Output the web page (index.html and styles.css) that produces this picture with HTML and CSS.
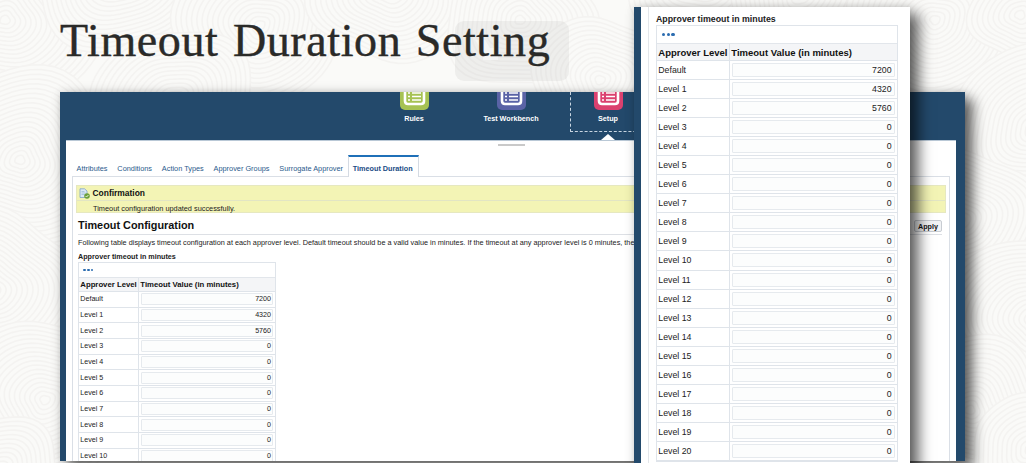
FILE: index.html
```
<!DOCTYPE html>
<html lang="en">

<head>
    <meta charset="utf-8">
    <title>Timeout Duration Setting</title>
    <link rel="stylesheet" href="styles.css">
</head>

<body>
    <svg class="backdrop" width="1026" height="463" aria-hidden="true">
        <g id="swirls" fill="none" stroke="#f4f3f1" stroke-width="1.6"></g>
    </svg>
    <div class="badge">
        <svg width="114" height="60" viewBox="0 0 114 60">
            <path d="M20 19h10l5 8h8v12H28v-8z" fill="#f5f5f4" />
        </svg>
    </div>

    <h1 class="title"><span>Timeout</span> <span>Duration</span> <span>Setting</span></h1>

    <div class="window">
        <div class="nav">
            <div class="nav-item">
                <svg class="nav-icon rules" viewBox="0 0 29 18">
                    <path d="M5 0v9q0 3 3 3h13q3 0 3-3V0" />
                    <path class="lines" d="M8 1h2M8 4.500h2M8 8h2M12 1h9M12 4.500h9M12 8h9" />
                </svg>
                <span>Rules</span>
            </div>
            <div class="nav-item">
                <svg class="nav-icon workbench" viewBox="0 0 29 18">
                    <path d="M5 0v9q0 3 3 3h13q3 0 3-3V0" />
                    <path class="lines" d="M8 1h2M8 4.500h2M8 8h2M12 1h9M12 4.500h9M12 8h9" />
                </svg>
                <span>Test Workbench</span>
            </div>
            <div class="nav-item active">
                <svg class="nav-icon setup" viewBox="0 0 29 18">
                    <path d="M5 0v9q0 3 3 3h13q3 0 3-3V0" />
                    <path class="lines" d="M8 1h2M8 4.500h2M8 8h2M12 1h9M12 4.500h9M12 8h9" />
                </svg>
                <span>Setup</span>
            </div>
        </div>

        <div class="page">
            <div class="grip"></div>
            <div class="tabs">
                <a class="tab">Attributes</a>
                <a class="tab">Conditions</a>
                <a class="tab">Action Types</a>
                <a class="tab">Approver Groups</a>
                <a class="tab">Surrogate Approver</a>
                <a class="tab selected">Timeout Duration</a>
            </div>
            <div class="panel">
                <div class="message">
                    <div class="message-head">
                        <svg width="11" height="11" viewBox="0 0 11 11">
                            <path d="M1 .8h4.500L8 3v6.500H1z" fill="#dbe9f6" stroke="#7fa3c8" stroke-width=".8" />
                            <path d="M2.500 3.500h3M2.500 5h4M2.500 6.500h3" stroke="#8db0d2" stroke-width=".6" />
                            <circle cx="8" cy="8" r="2.800" fill="#6da03a" />
                            <path d="M6.600 8l1 1 1.800-2" fill="none" stroke="#fff" stroke-width=".8" />
                        </svg>
                        <span>Confirmation</span>
                    </div>
                    <div class="message-text">Timeout configuration updated successfully.</div>
                </div>
                <div class="heading">
                    <h2>Timeout Configuration</h2>
                    <button class="apply">Apply</button>
                </div>
                <p class="note">Following table displays timeout configuration at each approver level. Default timeout should be a valid value in minutes. If the timeout at any approver level is 0 minutes, then</p>
                <div class="levels" data-last="10">
                    <h3>Approver timeout in minutes</h3>
                </div>
            </div>
        </div>
    </div>

    <div class="zoomed">
        <div class="zoomed-page">
            <div class="levels large" data-last="20">
                <h3>Approver timeout in minutes</h3>
            </div>
        </div>
    </div>

    <script>
        const timeouts = [7200, 4320, 5760];

        function addCell(grid, className, text) {
            const cell = document.createElement("div");
            cell.className = className;
            cell.textContent = text;
            grid.appendChild(cell);
            return cell;
        }

        //fill both copies of the level table
        document.querySelectorAll(".levels").forEach((levels) => {
            const grid = document.createElement("div");
            grid.className = "grid";
            const dots = addCell(grid, "dots", "");
            for (let i = 0; i < 3; i++) {
                dots.appendChild(document.createElement("i"));
            }
            addCell(grid, "cell head", "Approver Level");
            addCell(grid, "cell head last", "Timeout Value (in minutes)");
            for (let i = 0; i <= Number(levels.dataset.last); i++) {
                addCell(grid, "cell", i === 0 ? "Default" : `Level ${i}`);
                const cell = addCell(grid, "cell value", "");
                addCell(cell, "field", timeouts[i] || 0);
            }
            levels.appendChild(grid);
        });

        //background rings, later groups cover earlier ones
        const swirls = document.getElementById("swirls");
        const centers = [
            [5, 20, 95], [120, -30, 90], [260, 25, 85], [390, -10, 80], [520, 20, 75], [600, 80, 70],
            [175, 100, 80], [20, 160, 100], [-10, 290, 90], [45, 400, 90], [0, 470, 60],
            [700, -20, 70], [800, -5, 75], [935, 20, 85], [1020, 15, 50],
            [1035, 130, 90], [960, 220, 80], [1035, 320, 95], [970, 410, 80], [1030, 450, 60]
        ];

        //slightly uneven closed curve, like a hand drawn ring
        function ringPath(x, y, r, wobble) {
            let d = "";
            for (let step = 0; step < 60; step++) {
                const angle = step * Math.PI / 30;
                const radius = r * (1 + 0.07 * Math.sin(angle * 3 + wobble) + 0.03 * Math.cos(angle * 5 + wobble));
                const px = x + radius * Math.cos(angle);
                const py = y + radius * 0.9 * Math.sin(angle);
                d += `${step ? "L" : "M"}${px.toFixed(1)} ${py.toFixed(1)}`;
            }
            return d + "Z";
        }

        centers.forEach(([x, y, size], index) => {
            for (let r = size; r > 2; r -= 5) {
                const ring = document.createElementNS("http://www.w3.org/2000/svg", "path");
                ring.setAttribute("d", ringPath(x, y, r, index * 1.7));
                if (r === size) {
                    ring.setAttribute("fill", "#fafaf8");
                }
                swirls.appendChild(ring);
            }
        });
    </script>
</body>

</html>
```
FILE: styles.css
```
* {
    box-sizing: border-box;
}

body {
    margin: 0;
    width: 1026px;
    height: 463px;
    overflow: hidden;
    position: relative;
    background-color: #fafaf8;
    color: #222;
    font-family: "Liberation Sans", Arial, sans-serif;
}

.backdrop {
    position: absolute;
    top: 0;
    left: 0;
    z-index: -2;
}

.badge {
    position: absolute;
    left: 455px;
    top: 21px;
    width: 114px;
    height: 60px;
    border-radius: 9px;
    background-color: rgba(120, 120, 120, 0.09);
    z-index: -1;
}

.title {
    display: flex;
    gap: 14.5px;
    margin: 0;
    height: 92px;
    padding: 15px 0 0 60px;
    font: 46px/52px "Liberation Serif", serif;
    letter-spacing: 0.6px;
    color: #2a2a28;
    -webkit-text-stroke: 0.4px #2a2a28;
}

.window {
    width: 905px;
    height: 369px;
    margin-left: 60px;
    padding: 0 9px 0 6px;
    overflow: hidden;
    background-color: #23496b;
    box-shadow: 8px 7px 12px rgba(0, 0, 0, 0.6), 0 0 9px rgba(0, 0, 0, 0.15);
}

.nav {
    display: grid;
    grid-template-columns: 97px 97px 97px;
    justify-items: center;
    height: 48px;
    padding-left: 299.5px;
}

.nav-item {
    display: flex;
    flex-direction: column;
    align-items: center;
    width: 90px;
    height: 40px;
    font-size: 7.2px;
    font-weight: bold;
    line-height: 9px;
    color: #fff;
    white-space: nowrap;
    position: relative;
}

.nav-item.active {
    width: 76px;
    border: 1px dashed #c9d6e2;
    border-top: 0;
}

.nav-item.active::after {
    content: "";
    position: absolute;
    top: 42px;
    border: 7px solid transparent;
    border-top: 0;
    border-bottom: 6px solid #fff;
}

.nav-icon {
    width: 29px;
    height: 18px;
    margin-bottom: 4px;
    border-radius: 0 0 5px 5px;
    fill: none;
    stroke: #fff;
    stroke-width: 2.6;
}

.lines {
    stroke-width: 1.6;
}

.rules {
    background-color: #a6c253;
}

.workbench {
    background-color: #5a63a6;
}

.setup {
    background-color: #db416f;
}

.page {
    height: 321px;
    padding: 0 6px;
    background-color: #fff;
    border-top: 1px solid #b9c8d6;
}

.grip {
    width: 27px;
    height: 2px;
    margin: 3px 0 0 426px;
    background-color: #c9c9c9;
}

.tabs {
    display: flex;
    height: 30px;
    padding-left: 4.5px;
    gap: 9.8px;
    align-items: flex-end;
    color: #2a5b8c;
    font-size: 7.35px;
    line-height: 19px;
    white-space: nowrap;
}

.tab {
    height: 17px;
}

.tab.selected {
    height: 22px;
    margin-left: -5px;
    margin-bottom: -1px;
    padding: 3px 5px 0 4px;
    background-color: #fff;
    border: 1px solid #d5dbe3;
    border-top: 2px solid #1f70b8;
    border-bottom: 0;
    color: #1a4c85;
    font-size: 7.25px;
    font-weight: bold;
    line-height: 17px;
}

.panel {
    height: 300px;
    padding: 8px 3px 0;
    border: 1px solid #dadfe6;
}

.message {
    height: 28px;
    background-color: #f3f4b5;
    border: 1px solid #e6e8c0;
    font-size: 7.35px;
}

.message-head {
    display: flex;
    align-items: center;
    height: 15px;
    padding-left: 2px;
    gap: 2.5px;
    border-bottom: 1px solid #e2e5c4;
    font-size: 8.45px;
    font-weight: bold;
    color: #111;
}

.message-text {
    padding-left: 16px;
    line-height: 15px;
}

.heading {
    display: flex;
    justify-content: space-between;
    align-items: center;
    height: 22px;
    margin: 0 4px 0 2px;
    border-bottom: 1px solid #dde0e5;
}

h2 {
    margin: 2px 0 0;
    font-size: 10.87px;
    color: #111;
}

.apply {
    width: 28px;
    height: 12px;
    margin-top: 5px;
    padding: 0;
    border: 1px solid #c8ccd2;
    border-radius: 2px;
    background-color: #f1f3f5;
    color: #111;
    font: bold 7.2px/9px "Liberation Sans", Arial, sans-serif;
}

.note {
    margin: 0;
    padding: 3px 0 0 2px;
    font-size: 7.3px;
    line-height: 9px;
    white-space: nowrap;
}

.levels {
    width: 198px;
    margin: 5px 0 0 2px;
    font-size: 7.14px;
}

h3 {
    margin: 0;
    font-size: 7.2px;
    line-height: 10px;
    color: #222;
}

.grid {
    display: grid;
    grid-template-columns: 60px 1fr;
    grid-template-rows: 15px 14px;
    grid-auto-rows: 15.67px;
    border: 1px solid #dfe4ea;
}

.dots {
    grid-column: 1 / 3;
    display: flex;
    align-items: center;
    gap: 1px;
    padding-left: 4px;
    border-bottom: 1px solid #e2e6eb;
}

.dots i {
    width: 2.8px;
    height: 2.8px;
    border-radius: 50%;
    background-color: #2b6cb0;
}

.cell {
    display: flex;
    align-items: center;
    padding-left: 1.3px;
    border-right: 1px solid #dfe4ea;
    border-bottom: 1px solid #dfe4ea;
    white-space: nowrap;
}

.head {
    background-color: #f4f5f7;
    color: #111;
    font-size: 7.75px;
    font-weight: bold;
}

.head.last,
.value {
    border-right: 0;
}

.value {
    padding: 0 2px;
}

.field {
    flex: 1;
    height: 12px;
    padding-right: 1px;
    border: 1px solid #e6eaee;
    border-radius: 1px;
    background-color: #fcfdfd;
    line-height: 11px;
    text-align: right;
}

/* enlarged copy of the table */
.zoomed {
    position: absolute;
    left: 634px;
    top: 7px;
    width: 276px;
    height: 470px;
    padding-left: 7px;
    background-color: #23496b;
    box-shadow: 9px 7px 13px rgba(0, 0, 0, 0.6), 0 0 9px rgba(0, 0, 0, 0.15);
}

.zoomed-page {
    height: 100%;
    padding-left: 7px;
    background: linear-gradient(#e3e6ea, #e3e6ea) 7px 0 / 1px 100% no-repeat #fff;
}

.large {
    width: 242px;
    margin: 0 0 0 8px;
    padding-top: 6px;
    font-size: 8.75px;
}

.large h3 {
    font-size: 8.8px;
    line-height: 12px;
}

.large .grid {
    grid-template-columns: 73px 1fr;
    grid-template-rows: 18px 17px;
    grid-auto-rows: 19.05px;
}

.large .head {
    font-size: 9.5px;
}

.large .dots {
    padding-left: 5px;
    gap: 1.2px;
}

.large .dots i {
    width: 3.4px;
    height: 3.4px;
}

.large .field {
    height: 14px;
    padding-right: 2.5px;
    line-height: 13px;
}
```
